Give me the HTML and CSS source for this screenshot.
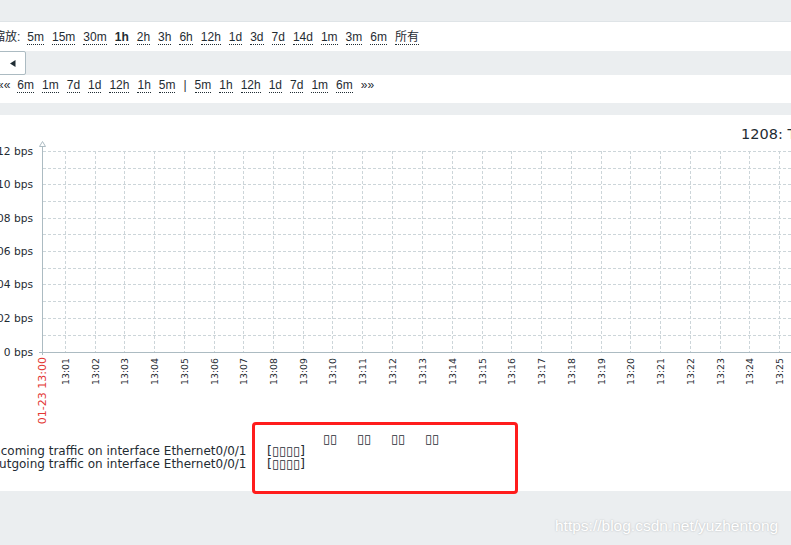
FILE: index.html
```html
<!DOCTYPE html>
<html lang="zh">

<head>
    <meta charset="UTF-8">
    <meta name="viewport" content="width=device-width, initial-scale=1.0">
    <title>Graph</title>
    <link rel="stylesheet" href="styles.css">
</head>

<body>
    <div class="top-space"></div>

    <!-- zoom periods -->
    <div class="zoom-row">
        <span class="label">缩放:</span>
        <a class="period">5m</a>
        <a class="period">15m</a>
        <a class="period">30m</a>
        <a class="period active">1h</a>
        <a class="period">2h</a>
        <a class="period">3h</a>
        <a class="period">6h</a>
        <a class="period">12h</a>
        <a class="period">1d</a>
        <a class="period">3d</a>
        <a class="period">7d</a>
        <a class="period">14d</a>
        <a class="period">1m</a>
        <a class="period">3m</a>
        <a class="period">6m</a>
        <a class="period">所有</a>
    </div>

    <div class="button-strip">
        <button class="btn-prev">
            <svg width="6" height="7" viewBox="0 0 6 7"><polygon points="0,3.5 5.5,0 5.5,7" /></svg>
        </button>
    </div>

    <!-- navigation -->
    <div class="nav-row">
        <span class="arrows">««</span>
        <a class="period">6m</a>
        <a class="period">1m</a>
        <a class="period">7d</a>
        <a class="period">1d</a>
        <a class="period">12h</a>
        <a class="period">1h</a>
        <a class="period">5m</a>
        <span class="sep">|</span>
        <a class="period">5m</a>
        <a class="period">1h</a>
        <a class="period">12h</a>
        <a class="period">1d</a>
        <a class="period">7d</a>
        <a class="period">1m</a>
        <a class="period">6m</a>
        <span class="arrows">»»</span>
    </div>

    <div class="gap-strip"></div>

    <div class="graph-box">
        <svg class="graph" width="791" height="376" viewBox="0 115 791 376">
            <text class="graph-title" x="741" y="139">1208: Traffic on interface Ethernet0/0/1</text>

            <g class="grid">
                <line x1="43" y1="151.5" x2="791" y2="151.5" />
                <line x1="43" y1="168.5" x2="791" y2="168.5" />
                <line x1="43" y1="184.5" x2="791" y2="184.5" />
                <line x1="43" y1="201.5" x2="791" y2="201.5" />
                <line x1="43" y1="218.5" x2="791" y2="218.5" />
                <line x1="43" y1="234.5" x2="791" y2="234.5" />
                <line x1="43" y1="251.5" x2="791" y2="251.5" />
                <line x1="43" y1="268.5" x2="791" y2="268.5" />
                <line x1="43" y1="284.5" x2="791" y2="284.5" />
                <line x1="43" y1="301.5" x2="791" y2="301.5" />
                <line x1="43" y1="318.5" x2="791" y2="318.5" />
                <line x1="43" y1="335.5" x2="791" y2="335.5" />

                <line x1="65.5" y1="151" x2="65.5" y2="352" />
                <line x1="95.5" y1="151" x2="95.5" y2="352" />
                <line x1="124.5" y1="151" x2="124.5" y2="352" />
                <line x1="154.5" y1="151" x2="154.5" y2="352" />
                <line x1="184.5" y1="151" x2="184.5" y2="352" />
                <line x1="214.5" y1="151" x2="214.5" y2="352" />
                <line x1="243.5" y1="151" x2="243.5" y2="352" />
                <line x1="273.5" y1="151" x2="273.5" y2="352" />
                <line x1="303.5" y1="151" x2="303.5" y2="352" />
                <line x1="332.5" y1="151" x2="332.5" y2="352" />
                <line x1="362.5" y1="151" x2="362.5" y2="352" />
                <line x1="392.5" y1="151" x2="392.5" y2="352" />
                <line x1="422.5" y1="151" x2="422.5" y2="352" />
                <line x1="452.5" y1="151" x2="452.5" y2="352" />
                <line x1="482.5" y1="151" x2="482.5" y2="352" />
                <line x1="511.5" y1="151" x2="511.5" y2="352" />
                <line x1="541.5" y1="151" x2="541.5" y2="352" />
                <line x1="571.5" y1="151" x2="571.5" y2="352" />
                <line x1="601.5" y1="151" x2="601.5" y2="352" />
                <line x1="630.5" y1="151" x2="630.5" y2="352" />
                <line x1="660.5" y1="151" x2="660.5" y2="352" />
                <line x1="690.5" y1="151" x2="690.5" y2="352" />
                <line x1="720.5" y1="151" x2="720.5" y2="352" />
                <line x1="749.5" y1="151" x2="749.5" y2="352" />
                <line x1="779.5" y1="151" x2="779.5" y2="352" />
            </g>

            <g class="axis">
                <line x1="42.5" y1="146" x2="42.5" y2="355" />
                <line x1="39" y1="352.5" x2="791" y2="352.5" />
                <polygon class="arrow" points="42.5,141.5 39.5,146.5 45.5,146.5" />
            </g>

            <g class="y-labels">
                <text x="33" y="155">0.12 bps</text>
                <text x="33" y="188">0.10 bps</text>
                <text x="33" y="222">0.08 bps</text>
                <text x="33" y="255">0.06 bps</text>
                <text x="33" y="288">0.04 bps</text>
                <text x="33" y="322">0.02 bps</text>
                <text x="33" y="355.5">0 bps</text>
            </g>

            <g class="x-labels">
                <text class="start" transform="translate(45.7,357) rotate(-90)">01-23 13:00</text>
                <text transform="translate(69,358) rotate(-90)">13:01</text>
                <text transform="translate(99,358) rotate(-90)">13:02</text>
                <text transform="translate(128,358) rotate(-90)">13:03</text>
                <text transform="translate(158,358) rotate(-90)">13:04</text>
                <text transform="translate(188,358) rotate(-90)">13:05</text>
                <text transform="translate(218,358) rotate(-90)">13:06</text>
                <text transform="translate(247,358) rotate(-90)">13:07</text>
                <text transform="translate(277,358) rotate(-90)">13:08</text>
                <text transform="translate(307,358) rotate(-90)">13:09</text>
                <text transform="translate(336,358) rotate(-90)">13:10</text>
                <text transform="translate(366,358) rotate(-90)">13:11</text>
                <text transform="translate(396,358) rotate(-90)">13:12</text>
                <text transform="translate(426,358) rotate(-90)">13:13</text>
                <text transform="translate(456,358) rotate(-90)">13:14</text>
                <text transform="translate(486,358) rotate(-90)">13:15</text>
                <text transform="translate(515,358) rotate(-90)">13:16</text>
                <text transform="translate(545,358) rotate(-90)">13:17</text>
                <text transform="translate(575,358) rotate(-90)">13:18</text>
                <text transform="translate(605,358) rotate(-90)">13:19</text>
                <text transform="translate(634,358) rotate(-90)">13:20</text>
                <text transform="translate(664,358) rotate(-90)">13:21</text>
                <text transform="translate(694,358) rotate(-90)">13:22</text>
                <text transform="translate(724,358) rotate(-90)">13:23</text>
                <text transform="translate(753,358) rotate(-90)">13:24</text>
                <text transform="translate(783,358) rotate(-90)">13:25</text>
            </g>

            <g class="legend">
                <text x="323" y="443" textLength="14" lengthAdjust="spacingAndGlyphs">▯▯</text>
                <text x="357" y="443" textLength="14" lengthAdjust="spacingAndGlyphs">▯▯</text>
                <text x="391" y="443" textLength="14" lengthAdjust="spacingAndGlyphs">▯▯</text>
                <text x="425" y="443" textLength="14" lengthAdjust="spacingAndGlyphs">▯▯</text>

                <text class="name" x="246.5" y="455">Incoming traffic on interface Ethernet0/0/1</text>
                <text class="name" x="246.5" y="468">Outgoing traffic on interface Ethernet0/0/1</text>
                <text x="267" y="455" textLength="38" lengthAdjust="spacingAndGlyphs">[▯▯▯▯]</text>
                <text x="267" y="468" textLength="38" lengthAdjust="spacingAndGlyphs">[▯▯▯▯]</text>
            </g>
        </svg>
    </div>

    <div class="note-box"></div>
    <div class="watermark">https://blog.csdn.net/yuzhentong</div>
</body>

</html>
```

FILE: styles.css
```css
body {
    margin: 0;
    height: 545px;
    overflow: hidden;
    background-color: #ebeef0;
    font-family: "Liberation Sans", "Noto Sans CJK SC", sans-serif;
    font-size: 12px;
    color: #1f2c33;
}

.top-space {
    height: 21px;
}

.zoom-row,
.nav-row {
    display: flex;
    align-items: flex-start;
    gap: 8px;
    background-color: white;
    box-sizing: border-box;
    white-space: nowrap;
}

.zoom-row {
    height: 30px;
    padding-top: 9px;
    border-top: 1px solid #dfe4e7;
}

.zoom-row .label {
    margin-left: -7px;
    margin-right: -1px;
    line-height: 13px;
}

.period {
    display: inline-block;
    line-height: 13px;
    border-bottom: 1px dotted #1f2c33;
    cursor: pointer;
}

.period.active {
    font-weight: bold;
}

.button-strip {
    height: 24px;
}

.btn-prev {
    display: flex;
    align-items: center;
    justify-content: center;
    width: 31px;
    height: 24px;
    margin-left: -5px;
    padding: 0 0 0 4px;
    background-color: white;
    border: 1px solid #acbbc2;
    border-radius: 2px;
    box-sizing: border-box;
}

.btn-prev svg {
    fill: #1f2c33;
}

.nav-row {
    height: 28px;
    padding-top: 4px;
}

.nav-row .arrows {
    line-height: 13px;
    color: #1f2c33;
}

.nav-row .arrows:first-child {
    margin-left: -3px;
    margin-right: -1px;
}

.nav-row .sep {
    line-height: 13px;
}

.gap-strip {
    height: 12px;
}

.graph-box {
    height: 376px;
    background-color: white;
}

.graph {
    display: block;
    font-family: "DejaVu Sans", sans-serif;
    fill: #1f2c33;
}

.graph-title {
    font-size: 14.5px;
}

.grid line {
    stroke: #ccd5d9;
    stroke-width: 1;
    stroke-dasharray: 3 2;
}

.axis line {
    stroke: #acbbc2;
    stroke-width: 1;
}

.axis .arrow {
    fill: white;
    stroke: #acbbc2;
    stroke-width: 1;
}

.y-labels text {
    font-size: 10.67px;
    text-anchor: end;
}

.x-labels text {
    font-size: 9.33px;
    text-anchor: end;
}

.x-labels .start {
    font-size: 11px;
    fill: #e33734;
}

.legend text {
    font-size: 12px;
}

.legend .name {
    text-anchor: end;
}

/* annotation frame drawn over the legend */
.note-box {
    position: absolute;
    left: 252px;
    top: 422px;
    width: 266px;
    height: 72px;
    border: 3px solid #ff1c1c;
    border-radius: 4px;
    box-sizing: border-box;
}

.watermark {
    position: absolute;
    left: 555px;
    top: 518px;
    font-family: "Liberation Sans", sans-serif;
    font-size: 15.5px;
    line-height: 1;
    color: white;
    text-shadow: 0 0 2px rgba(0, 0, 0, 0.25);
}
```
